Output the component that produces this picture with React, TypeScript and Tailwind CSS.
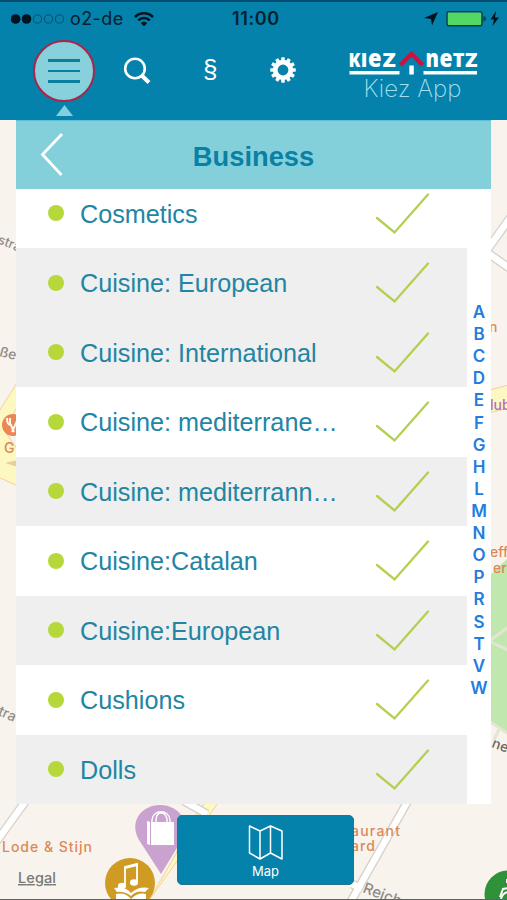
const rows = [
  { label: 'Cosmetics', shaded: false },
  { label: 'Cuisine: European', shaded: true },
  { label: 'Cuisine: International', shaded: true },
  { label: 'Cuisine: mediterrane…', shaded: false },
  { label: 'Cuisine: mediterrann…', shaded: true },
  { label: 'Cuisine:Catalan', shaded: false },
  { label: 'Cuisine:European', shaded: true },
  { label: 'Cushions', shaded: false },
  { label: 'Dolls', shaded: true },
];

const letters = 'ABCDEFGHLMNOPRSTVW'.split('');

function MapBackground() {
  return (
    <svg className="absolute inset-0 h-full w-full font-['Inter','Liberation_Sans',sans-serif]" viewBox="0 0 507 900" aria-hidden="true">
      <rect width="507" height="900" fill="#f8f4ed" />
      {/* yellow arterial roads */}
      <g fill="#fdf7c2" stroke="#f2cfa0" strokeWidth="1">
        <path d="M-2 413 L20 378 V402 L4 430 L20 453 V487 L-2 477Z" />
        <path d="M489 390 L509 385 V408 L489 413Z" />
        <path d="M148 902 L220 800 H207 L183 832 L176 854 L148 902Z" />
      </g>
      <path d="M5 463 L18 460 V467Z" fill="#e5cf9e" />
      {/* park */}
      <path d="M488 577 L509 557 V733 L488 720Z" fill="#bfe7ae" />
      {/* side streets */}
      <g fill="none" stroke="#d3d0cb" strokeWidth="9">
        <path d="M-6 845 L30 795" />
        <path d="M409 799 L350 903" />
        <path d="M485 253 L515 211" />
        <path d="M485 251 L512 270" />
        <path d="M184 801 L207 814" />
        <path d="M352 884 L362 889" />
      </g>
      <g fill="none" stroke="#ffffff" strokeWidth="6.5">
        <path d="M-6 845 L30 795" />
        <path d="M409 799 L350 903" />
        <path d="M485 253 L515 211" />
        <path d="M485 251 L512 270" />
        <path d="M184 801 L207 814" />
        <path d="M350 883 L362 889" />
      </g>
      <g fill="none" stroke="#e2e6d2" strokeWidth="3">
        <path d="M489 641 L510 626" />
        <path d="M489 641 L510 651" />
        <path d="M489 721 L510 735" />
        <path d="M500 727 L494 740" />
      </g>
      {/* street names */}
      <g fill="#8f8d8b" fontSize="14" fontWeight="500">
        <text x="-3" y="243" transform="rotate(22 -3 243)" fontSize="13">stra</text>
        <text x="-9" y="354" transform="rotate(14 -9 354)">aße</text>
        <text x="-11" y="711" transform="rotate(24 -11 711)">Stra</text>
        <text x="362" y="892" transform="rotate(21 362 892)" fontSize="15">Reich</text>
        <text x="491" y="747" transform="rotate(20 491 747)" fill="#686460">ne</text>
      </g>
      {/* places */}
      <g fill="#dc8858" fontSize="14" fontWeight="500">
        <text x="2" y="852" textLength="90">Lode &amp; Stijn</text>
        <text x="351" y="836" textLength="49">aurant</text>
        <text x="351" y="851" textLength="24">ard</text>
        <text x="4" y="453">G</text>
        <text x="489" y="332">n</text>
        <text x="490" y="557">eff</text>
        <text x="493" y="573">er</text>
      </g>
      <text x="490" y="410" fill="#ad70bd" fontSize="14" fontWeight="500">lub</text>
      <circle cx="13" cy="425" r="11" fill="#ea8754" />
      <path d="M7 418 C7 424 9 425 11 425 L14 432 M10 418 V424 M18 419 L12 432 M16 418 H21" stroke="#fff7e9" strokeWidth="2" fill="none" />
      <text x="18" y="883" fill="#797876" fontSize="14.5" fontWeight="500" textLength="38" textDecoration="underline">Legal</text>

      {/* shopping pin */}
      <path d="M161 874 L141 843 C127 823 141 805 160 805 C180 805 193 824 180 843Z" fill="#c9a2cf" />
      <path d="M151 822 H174 V845 H151Z M147 821 L150 822 V845 L147 844Z" fill="white" />
      <path d="M152 823 V820 C153 809 169 809 170 820 V823 M156 823 V819 C157 811 165 811 167 819 V823" fill="none" stroke="white" strokeWidth="1.4" />
      {/* culture badge */}
      <circle cx="130" cy="883" r="25" fill="#d09b22" />
      <path d="M125 885 V867 L137 864 V882" fill="none" stroke="white" strokeWidth="1.8" />
      <path d="M125 868 L137 865" stroke="white" strokeWidth="2" />
      <ellipse cx="122" cy="886" rx="4" ry="3.3" fill="white" />
      <ellipse cx="134" cy="882.5" rx="4" ry="3.3" fill="white" />
      <path d="M114 888 Q125 886 131 893 Q139 886 149 888 L145 892 Q136 890 131 896 Q124 891 117 892Z M116 894 Q125 892 131 899 Q138 892 146 894 V900 H116Z" fill="white" />
      {/* green badge */}
      <circle cx="508" cy="894" r="23.5" fill="#2f9138" />
      <circle cx="509" cy="900" r="8" fill="none" stroke="white" strokeWidth="2" />
      <path d="M500 897 L503 889 L509 888 M507 879 V883" fill="none" stroke="white" strokeWidth="2" />
    </svg>
  );
}

function StatusBar() {
  return (
    <div className="flex h-[36px] items-center border-t-2 border-[#064d70] pr-[7px] pl-[11px] text-[#06212e]">
      <svg width="54" height="12" viewBox="0 0 54 12">
        <circle cx="4.6" cy="6" r="4.8" fill="#00131e" />
        <circle cx="15.5" cy="6" r="4.8" fill="#00131e" />
        <g fill="none" stroke="#064f70" strokeWidth="1">
          <circle cx="26.5" cy="6" r="4.1" />
          <circle cx="37.5" cy="6" r="4.1" />
          <circle cx="48.5" cy="6" r="4.1" />
        </g>
      </svg>
      <span className="ml-[5px] w-[54px] text-[18px] leading-none tracking-[0.4px] whitespace-nowrap">o2-de</span>
      <svg className="ml-[10px]" width="20" height="16" viewBox="0 0 20 16" fill="none" stroke="#00131e" strokeWidth="2.5">
        <path d="M1 6 C6 1 14 1 19 6" />
        <path d="M4.2 9.4 C7.5 6.2 12.5 6.2 15.8 9.4" />
        <path d="M6.8 12 Q10 9 13.2 12 L10 15.3Z" fill="#00131e" stroke="none" />
      </svg>
      <span className="ml-[78px] w-[52px] text-[18px] leading-none font-semibold tracking-[0.6px]">11:00</span>
      <svg className="ml-auto" width="78" height="18" viewBox="0 0 78 18">
        <path d="M2 8 L16 2 L10 15.5 L9 9Z" fill="#00131e" />
        <rect x="25" y="1.7" width="35" height="14" rx="2" fill="#54d865" stroke="#064256" strokeWidth="1.5" />
        <path d="M61.5 6 Q64 6.5 64 8.7 Q64 11 61.5 11.5Z" fill="#064256" />
        <path d="M74 1 L68.5 9.5 H72 L70.5 16 L77 7.5 H73Z" fill="#00131e" />
      </svg>
    </div>
  );
}

function Logo() {
  return (
    <svg width="130" height="54" viewBox="348 50 130 54" fill="white" className="font-['Open_Sans','Liberation_Sans',sans-serif]">
      <g fontWeight="800" fontSize="19">
        <text y="67" x="348.4" textLength="12" lengthAdjust="spacingAndGlyphs">K</text>
        <text y="67" x="360.8">I</text>
        <text y="67" x="368" fontSize="24" textLength="13.5" lengthAdjust="spacingAndGlyphs">e</text>
        <text y="67" x="382.5" textLength="13.3" lengthAdjust="spacingAndGlyphs">Z</text>
        <text y="67" x="425.5" fontSize="24" textLength="13.5" lengthAdjust="spacingAndGlyphs">n</text>
        <text y="67" x="439.5" fontSize="24" textLength="13" lengthAdjust="spacingAndGlyphs">e</text>
        <text y="67" x="452.8" textLength="11.8" lengthAdjust="spacingAndGlyphs">T</text>
        <text y="67" x="465" textLength="12.5" lengthAdjust="spacingAndGlyphs">Z</text>
      </g>
      <path d="M349.5 71 H399.5 V74.5 H349.5Z M423.5 71 H477 V74.5 H423.5Z M409.3 65.5 H413.8 V74.5 H409.3Z" />
      <path d="M400.5 65 L411.5 54 L422.5 65" fill="none" stroke="#c8143f" strokeWidth="4.4" />
      <text x="363.5" y="96.5" fontSize="23.5" fontWeight="200" fill="#a3dff0" textLength="98" lengthAdjust="spacingAndGlyphs" className="font-['Inter','Liberation_Sans',sans-serif]">Kiez App</text>
    </svg>
  );
}

function SearchIcon() {
  return (
    <svg width="28" height="28" viewBox="0 0 28 28" fill="none" stroke="white">
      <circle cx="12" cy="11.5" r="9.8" strokeWidth="2.6" />
      <path d="M18.2 18 L26 25.5" strokeWidth="4" />
    </svg>
  );
}

function GearIcon() {
  const teeth = Array.from({ length: 12 }, (_, i) => i * 30);
  return (
    <svg width="26" height="26" viewBox="-13 -13 26 26">
      <circle r="7.8" fill="none" stroke="white" strokeWidth="4.8" />
      {teeth.map((angle) => (
        <rect key={angle} x="-1.8" y="-12.8" width="3.6" height="5" rx="0.8" fill="white" transform={`rotate(${angle})`} />
      ))}
    </svg>
  );
}

function Toolbar() {
  return (
    <div className="flex h-[84px] items-start pl-[33px]">
      <div className="flex flex-col items-center pt-[4px]">
        <button aria-label="Menu" className="flex size-[62px] flex-col items-center justify-center gap-2 rounded-full border-2 border-[#ad2448] bg-[#86d1dc]">
          <span className="h-[2.5px] w-8 bg-[#087fa0]" />
          <span className="h-[2.5px] w-8 bg-[#087fa0]" />
          <span className="h-[2.5px] w-8 bg-[#087fa0]" />
        </button>
        <svg className="mt-[3px]" width="17" height="11" viewBox="0 0 17 11">
          <path d="M8.5 0 L17 11 H0Z" fill="#82d0df" />
        </svg>
      </div>
      <div className="ml-[28px] pt-[21px]"><SearchIcon /></div>
      <span className="ml-[52px] w-[14px] pt-[17px] text-[26px] leading-8 text-white font-['Liberation_Sans',Arial,sans-serif]">§</span>
      <div className="ml-[53px] pt-[21px]"><GearIcon /></div>
      <div className="ml-[52px] pt-[14px]"><Logo /></div>
    </div>
  );
}

function Row({ label, shaded }: { label: string; shaded: boolean }) {
  return (
    <li className={`flex h-[69.5px] shrink-0 items-center pl-8 ${shaded ? 'bg-[#efefef]' : 'bg-white'}`}>
      <span className="size-4 shrink-0 rounded-full bg-[#b6d83b]" />
      <span className="ml-4 w-[280px] pt-px text-[25.2px] leading-8 whitespace-nowrap text-[#2185a3]">{label}</span>
      <svg className="mt-px ml-[15px]" width="56" height="42" viewBox="0 0 56 42" fill="none" stroke="#b3d050" strokeWidth="2.3" strokeLinecap="round">
        <path d="M2 25 L19.5 39.5 L53 1.5" />
      </svg>
    </li>
  );
}

export default function App() {
  return (
    <div className="relative flex h-[900px] w-[507px] flex-col overflow-hidden">
      <MapBackground />
      <header className="relative h-[120px] shrink-0 bg-[#0482ab] font-['Inter','Liberation_Sans',sans-serif]">
        <StatusBar />
        <Toolbar />
      </header>
      <main className="relative mx-4 flex h-[684px] w-[475px] shrink-0 flex-col bg-white font-['Liberation_Sans',Arial,sans-serif]">
        <div className="flex h-[69px] shrink-0 items-center border-t border-[#5dc0d8] bg-[#83d0db] pr-[48px] pl-6">
          <svg width="24" height="44" viewBox="0 0 24 44" fill="none" stroke="white" strokeWidth="2.8">
            <path d="M22 1 L2.5 21.5 L21.5 42" />
          </svg>
          <h1 className="flex-1 pt-1 text-center text-[27.3px] leading-8 font-bold text-[#0981a5]">Business</h1>
        </div>
        <div className="flex min-h-0 flex-1">
          <ul className="flex w-[451px] flex-col justify-end overflow-hidden">
            {rows.map((row) => <Row key={row.label} {...row} />)}
          </ul>
          <nav className="flex w-6 flex-col items-center pt-[112px] font-['Inter','Liberation_Sans',sans-serif]">
            {letters.map((letter) => (
              <span key={letter} className="h-[22.12px] text-[17px] leading-[22px] font-semibold text-[#237de0]">{letter}</span>
            ))}
          </nav>
        </div>
      </main>
      <button className="relative mt-[11px] ml-[177px] flex h-[70px] w-[177px] shrink-0 flex-col items-center rounded-[5px] border border-[#25738c] bg-[#0482ab] pt-[8px] text-white">
        <svg width="36" height="37" viewBox="0 0 36 37" fill="none" stroke="white" strokeWidth="1.5" strokeLinejoin="round">
          <path d="M1.5 2 L12 7 L22.5 2 L34 7 V35 L22.5 29 L12 35 L1.5 29Z M12 7 V35 M22.5 2 V29" />
        </svg>
        <span className="mt-[2px] text-[13px] leading-4 font-['Inter','Liberation_Sans',sans-serif]">Map</span>
      </button>
      <div className="relative mt-auto h-px bg-[#626262]" />
    </div>
  );
}
